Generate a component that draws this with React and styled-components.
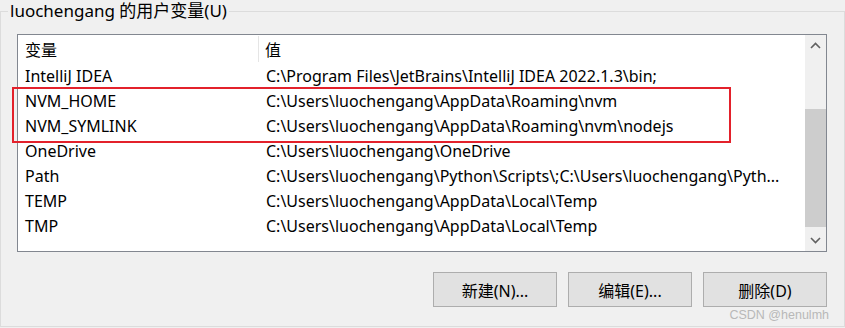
import React from "react";
import styled, { createGlobalStyle } from "styled-components";

const Global = createGlobalStyle`
  html, body { margin: 0; padding: 0; background: #f0f0f0; }
  body { font-family: "Noto Sans", "Noto Sans CJK SC", sans-serif; font-size: 16px; color: #000; }
  * { box-sizing: border-box; }
`;

const Page = styled.div`
  width: 845px;
  height: 328px;
  padding-top: 11px;
  position: relative;
  overflow: hidden;
`;

const GroupBox = styled.div`
  position: relative;
  width: 845px;
  height: 316px;
  border: 1px solid #dcdcdc;
  padding: 22px 0 0 16px;
  display: flex;
  flex-direction: column;
`;

const Title = styled.div`
  position: absolute;
  top: -13px;
  left: 7px;
  padding: 0 2px;
  background: #f0f0f0;
  font-size: 17px;
  line-height: 24px;
  white-space: nowrap;
`;

const ListBox = styled.div`
  position: relative;
  width: 810px;
  height: 218px;
  border: 1px solid #828790;
  background: #fff;
  display: flex;
`;

const ListContent = styled.div`
  flex: 1;
  min-width: 0;
  display: flex;
  flex-direction: column;
`;

const Header = styled.div`
  height: 28px;
  display: flex;
  align-items: center;
`;

const HeaderCell = styled.div`
  width: ${(p) => p.$w || "auto"};
  flex: ${(p) => (p.$w ? "none" : "1")};
  height: 26px;
  display: flex;
  align-items: center;
  padding-left: ${(p) => p.$pad}px;
  border-right: ${(p) => (p.$divider ? "1px solid #e5e5e5" : "none")};
`;

const Row = styled.div`
  height: 25px;
  display: flex;
  align-items: center;
  white-space: nowrap;
`;

const Cell = styled.div`
  width: ${(p) => p.$w || "auto"};
  flex: ${(p) => (p.$w ? "none" : "1")};
  min-width: 0;
  overflow: hidden;
  padding-left: ${(p) => p.$pad}px;
`;

const ScrollBar = styled.div`
  width: 21px;
  background: #f0f0f0;
  display: flex;
  flex-direction: column;
`;

const ArrowButton = styled.div`
  height: 21px;
  display: flex;
  align-items: center;
  justify-content: center;
`;

const Track = styled.div`
  flex: 1;
  padding-top: 53px;
`;

const Thumb = styled.div`
  width: 21px;
  height: 118px;
  background: #cdcdcd;
`;

const Highlight = styled.div`
  position: absolute;
  left: -6px;
  top: 52px;
  width: 719px;
  height: 56px;
  border: 2px solid #e3212b;
  pointer-events: none;
`;

const ButtonRow = styled.div`
  display: flex;
  justify-content: flex-end;
  gap: 11px;
  width: 810px;
  margin-top: 20px;
`;

const Button = styled.button`
  width: 124px;
  height: 35px;
  background: #e1e1e1;
  border: 1px solid #adadad;
  font-family: inherit;
  font-size: 16px;
  color: #000;
  padding: 0;
`;

const Watermark = styled.div`
  position: absolute;
  right: 16px;
  bottom: 6px;
  font-family: "Liberation Sans", Arial, sans-serif;
  font-size: 12.5px;
  color: #b8b8b8;
`;

const Chevron = ({ up }) => (
  <svg width="11" height="7" viewBox="0 0 11 7">
    <path
      d={up ? "M1 6 L5.5 1.5 L10 6" : "M1 1 L5.5 5.5 L10 1"}
      fill="none"
      stroke="#606060"
      strokeWidth="1.6"
    />
  </svg>
);

const rows = [
  ["IntelliJ IDEA", "C:\\Program Files\\JetBrains\\IntelliJ IDEA 2022.1.3\\bin;"],
  ["NVM_HOME", "C:\\Users\\luochengang\\AppData\\Roaming\\nvm"],
  ["NVM_SYMLINK", "C:\\Users\\luochengang\\AppData\\Roaming\\nvm\\nodejs"],
  ["OneDrive", "C:\\Users\\luochengang\\OneDrive"],
  ["Path", "C:\\Users\\luochengang\\Python\\Scripts\\;C:\\Users\\luochengang\\Pyth..."],
  ["TEMP", "C:\\Users\\luochengang\\AppData\\Local\\Temp"],
  ["TMP", "C:\\Users\\luochengang\\AppData\\Local\\Temp"],
];

export default function App() {
  return (
    <>
      <Global />
      <Page>
        <GroupBox>
          <Title>luochengang 的用户变量(U)</Title>
          <ListBox>
            <ListContent>
              <Header>
                <HeaderCell $w="241px" $pad={7} $divider>变量</HeaderCell>
                <HeaderCell $pad={6}>值</HeaderCell>
              </Header>
              {rows.map(([k, v]) => (
                <Row key={k}>
                  <Cell $w="242px" $pad={7}>{k}</Cell>
                  <Cell $pad={6}>{v}</Cell>
                </Row>
              ))}
            </ListContent>
            <ScrollBar>
              <ArrowButton><Chevron up /></ArrowButton>
              <Track><Thumb /></Track>
              <ArrowButton><Chevron /></ArrowButton>
            </ScrollBar>
            <Highlight />
          </ListBox>
          <ButtonRow>
            <Button>新建(N)...</Button>
            <Button>编辑(E)...</Button>
            <Button>删除(D)</Button>
          </ButtonRow>
        </GroupBox>
        <Watermark>CSDN @henulmh</Watermark>
      </Page>
    </>
  );
}
